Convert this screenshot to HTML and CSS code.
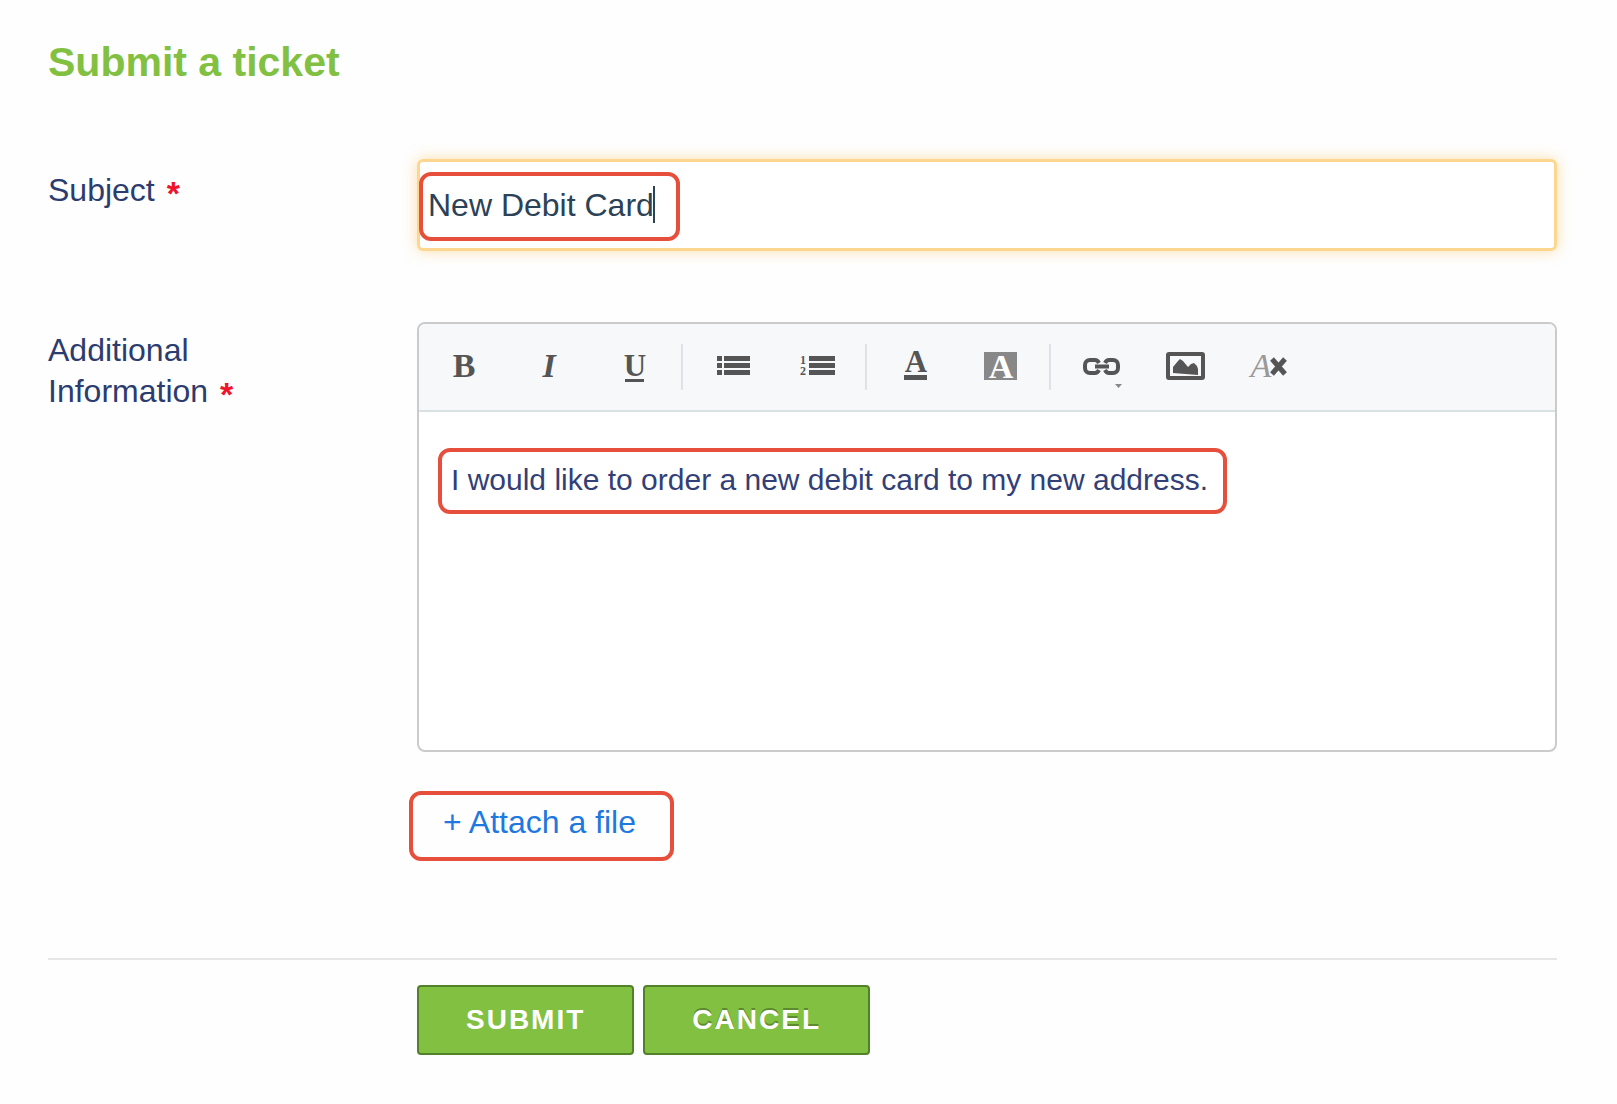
FILE: index.html
```
<!DOCTYPE html>
<html lang="en">
<head>
<meta charset="UTF-8">
<title>Submit a ticket</title>
<link rel="stylesheet" href="styles.css">
</head>
<body>
<form id="ticket" action="#">
	<h1>Submit a ticket</h1>

	<div class="row">
		<label for="subject">Subject <span class="required">*</span></label>
		<div class="field">
			<input type="text" id="subject" value="New Debit Card">
			<span class="mark mark-subject"></span>
		</div>
	</div>

	<div class="row row-info">
		<label for="info">Additional Information <span class="required">*</span></label>
		<div class="field">
			<div class="editor">
				<div class="toolbar">
					<button type="button" aria-label="Bold"><svg viewBox="0 0 48 48"><text x="24" y="34" font-size="34" font-weight="bold">B</text></svg></button>
					<button type="button" aria-label="Italic"><svg viewBox="0 0 48 48"><text x="25" y="34" font-size="34" font-weight="bold" font-style="italic">I</text></svg></button>
					<button type="button" aria-label="Underline"><svg viewBox="0 0 48 48"><text x="27" y="33" font-size="31" font-weight="bold">U</text><path d="M17 36h19v3H17z"/></svg></button>
					<span class="sep"></span>
					<button type="button" aria-label="Bullet list"><svg viewBox="0 0 48 48"><path d="M9 13h5v5H9zM9 20h5v5H9zM9 27h5v5H9zM16 13h26v5H16zM16 20h26v5H16zM16 27h26v5H16z"/></svg></button>
					<button type="button" aria-label="Numbered list"><svg viewBox="0 0 48 48"><text x="11" y="21" font-size="12" font-weight="bold">1</text><text x="11" y="32" font-size="12" font-weight="bold">2</text><path d="M17 13h26v5H17zM17 20h26v5H17zM17 27h26v5H17z"/></svg></button>
					<span class="sep"></span>
					<button type="button" aria-label="Text colour"><svg viewBox="0 0 48 48"><text x="24" y="29" font-size="31" font-weight="bold">A</text><path d="M12 32h23v5H12z"/></svg></button>
					<button type="button" aria-label="Background colour"><svg viewBox="0 0 48 48"><path class="grey" d="M8 9h33v28H8z"/><text class="white" x="25" y="35" font-size="34" font-weight="bold">A</text></svg></button>
					<span class="sep"></span>
					<button type="button" aria-label="Insert link"><svg viewBox="0 0 48 48"><path class="line" d="M23 20c-1-2-2-3-4-3h-5c-3 0-5 2-5 5v3c0 3 2 5 5 5h5c2 0 3-1 4-3M29 20c1-2 2-3 4-3h4c3 0 5 2 5 5v3c0 3-2 5-5 5h-4c-2 0-3-1-4-3M19 23.500h14"/><path class="grey" d="M39 41h7l-3.500 4z"/></svg></button>
					<button type="button" aria-label="Insert image"><svg viewBox="0 0 48 48"><rect class="frame" x="8" y="11" width="35" height="24" rx="1"/><path d="M13 30v-6l5-6 2-2 3 2 5 6 3-3 3-1 3 3 1 3v6z"/></svg></button>
					<button type="button" aria-label="Clear formatting"><svg viewBox="0 0 48 48"><text class="light" x="17" y="34" font-size="34" font-style="italic">A</text><path class="cross" d="M28 16l13 15M41 16L28 31"/></svg></button>
				</div>
				<textarea id="info">I would like to order a new debit card to my new address.</textarea>
				<span class="mark mark-info"></span>
			</div>
			<div class="attach">
				<a href="#">+ Attach a file</a>
				<span class="mark mark-attach"></span>
			</div>
		</div>
	</div>

	<div class="actions">
		<button type="submit">SUBMIT</button>
		<button type="button" class="cancel">CANCEL</button>
	</div>
</form>
</body>
</html>
```

FILE: styles.css
```
* {margin:0; padding:0; box-sizing:border-box;}
body {background:#fefefe; color:#2c3c6e; font-family:"Liberation Sans", Arial, sans-serif; font-size:32px; line-height:41px;}
#ticket {padding:38px 60px 50px 48px;}
h1 {font-size:41px; line-height:48px; color:#82c042; margin-bottom:73px;}

.row {display:grid; grid-template-columns:369px 1fr; margin-bottom:71px;}
.row label {padding:11px 60px 0 0;}
.row-info {margin-bottom:115px;}
.row-info label {padding-top:8px;}
.required {font-size:34px; font-weight:bold; line-height:0; vertical-align:-4px; margin-left:3px; color:#f0142a;}
.field {position:relative;}

#subject {display:block; width:100%; height:92px; padding:0 8px; border:3px solid #fdd78f; border-radius:6px; outline:none; background:#fff; box-shadow:0 0 14px rgba(253,190,80,0.5); font:inherit; color:#2b4257;}

.editor {position:relative; border:2px solid #cbcbcb; border-radius:8px; background:#fff;}
.toolbar {display:flex; align-items:center; height:88px; padding-left:3px; background:#f7f8fa; border-bottom:2px solid #dae1e5; border-radius:6px 6px 0 0;}
.toolbar button {width:84px; height:84px; border:0; background:none; cursor:pointer;}
.toolbar svg {display:block; width:48px; height:48px; margin:0 auto; fill:#555;}
.toolbar text {font-family:"Liberation Serif", "Times New Roman", serif; text-anchor:middle;}
.toolbar .grey {fill:#888;}
.toolbar .light {fill:#999;}
.toolbar .white {fill:#fff;}
.toolbar .line {fill:none; stroke:#555; stroke-width:4;}
.toolbar .frame {fill:none; stroke:#555; stroke-width:4;}
.toolbar .cross {fill:none; stroke:#555; stroke-width:5;}
.sep {width:2px; height:46px; margin:0 7px; background:#e0e2e8;}
#info {display:block; width:100%; height:338px; padding:47px 32px; border:0; border-radius:6px; outline:none; resize:none; background:none; font:inherit; font-size:30px; color:#333f77;}

.attach {position:relative; margin-top:50px; padding-left:26px;}
.attach a {color:#1f78e0; text-decoration:none;}

/* red outlines and the text cursor */
.mark {position:absolute; border:4px solid #e64f3c; border-radius:12px; pointer-events:none;}
.mark-subject {left:2px; top:13px; width:261px; height:69px;}
.mark-subject:after {content:""; position:absolute; left:230px; top:10px; width:2px; height:37px; background:#2b4257;}
.mark-info {left:19px; top:124px; width:789px; height:66px;}
.mark-attach {left:-8px; top:-11px; width:265px; height:70px;}

.actions {display:flex; gap:9px; padding:25px 0 0 369px; border-top:2px solid #e6e6e6;}
.actions button {height:70px; padding:0 47px; border:2px solid #53812a; border-radius:4px; background:#82c042; color:#fff; font-family:inherit; font-size:28px; font-weight:bold; letter-spacing:2px; cursor:pointer;}
.actions .cancel {text-shadow:0 -2px 0 rgba(0,0,0,0.3);}
```
